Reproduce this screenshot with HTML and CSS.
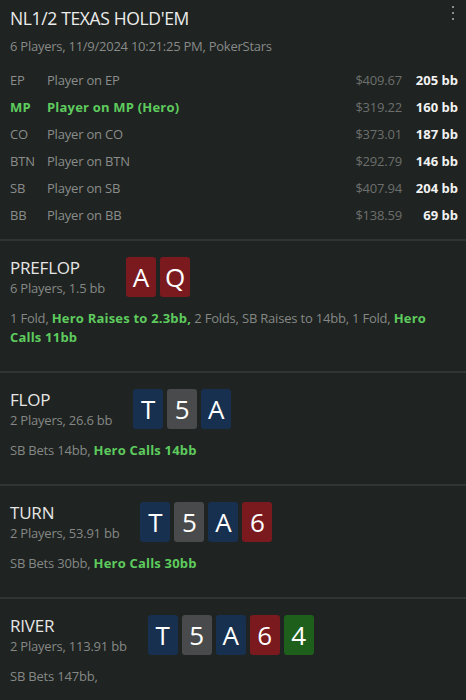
FILE: index.html
```html
<!DOCTYPE html>
<html>
<head>
<meta charset="utf-8">
<link rel="stylesheet" href="styles.css">
</head>
<body>
<div class="app">
  <header class="head">
    <div class="menu"><span></span><span></span><span></span></div>
    <h1 class="title">NL1/2 TEXAS HOLD'EM</h1>
    <div class="sub">6 Players, 11/9/2024 10:21:25 PM, PokerStars</div>
    <div class="players">
      <div class="prow"><span class="pos">EP</span><span class="name">Player on EP</span><span class="usd">$409.67</span><span class="bb">205 bb</span></div>
      <div class="prow hero"><span class="pos">MP</span><span class="name">Player on MP (Hero)</span><span class="usd">$319.22</span><span class="bb">160 bb</span></div>
      <div class="prow"><span class="pos">CO</span><span class="name">Player on CO</span><span class="usd">$373.01</span><span class="bb">187 bb</span></div>
      <div class="prow"><span class="pos">BTN</span><span class="name">Player on BTN</span><span class="usd">$292.79</span><span class="bb">146 bb</span></div>
      <div class="prow"><span class="pos">SB</span><span class="name">Player on SB</span><span class="usd">$407.94</span><span class="bb">204 bb</span></div>
      <div class="prow"><span class="pos">BB</span><span class="name">Player on BB</span><span class="usd">$138.59</span><span class="bb">69 bb</span></div>
    </div>
  </header>

  <section class="street">
    <div class="top">
      <div class="info">
        <div class="sname">PREFLOP</div>
        <div class="sdesc">6 Players, 1.5 bb</div>
      </div>
      <div class="cards"><span class="card red">A</span><span class="card red">Q</span></div>
    </div>
    <p class="actions">1 Fold, <b>Hero Raises to 2.3bb,</b> 2 Folds, SB Raises to 14bb, 1 Fold, <b>Hero Calls 11bb</b></p>
  </section>

  <section class="street">
    <div class="top">
      <div class="info">
        <div class="sname">FLOP</div>
        <div class="sdesc">2 Players, 26.6 bb</div>
      </div>
      <div class="cards"><span class="card blue">T</span><span class="card gray">5</span><span class="card blue">A</span></div>
    </div>
    <p class="actions">SB Bets 14bb, <b>Hero Calls 14bb</b></p>
  </section>

  <section class="street">
    <div class="top">
      <div class="info">
        <div class="sname">TURN</div>
        <div class="sdesc">2 Players, 53.91 bb</div>
      </div>
      <div class="cards"><span class="card blue">T</span><span class="card gray">5</span><span class="card blue">A</span><span class="card red">6</span></div>
    </div>
    <p class="actions">SB Bets 30bb, <b>Hero Calls 30bb</b></p>
  </section>

  <section class="street">
    <div class="top">
      <div class="info">
        <div class="sname">RIVER</div>
        <div class="sdesc">2 Players, 113.91 bb</div>
      </div>
      <div class="cards"><span class="card blue">T</span><span class="card gray">5</span><span class="card blue">A</span><span class="card red">6</span><span class="card green">4</span></div>
    </div>
    <p class="actions">SB Bets 147bb,</p>
  </section>
</div>
</body>
</html>
```
FILE: styles.css
```css
* { box-sizing: border-box; }
html, body { margin: 0; padding: 0; background: #1f2321; }
body {
  font-family: "Open Sans", "Noto Sans", sans-serif;
  color: #8c8f8d;
  width: 466px;
  height: 700px;
  overflow: hidden;
}
.app { display: flex; flex-direction: column; }
.head {
  position: relative;
  padding: 6px 8px 11px 10px;
  border-bottom: 2px solid #303533;
}
.menu {
  position: absolute;
  top: 6px;
  right: 12px;
  display: flex;
  flex-direction: column;
  gap: 4px;
}
.menu span { width: 2px; height: 2px; background: #8a8d8b; display: block; }
.title {
  margin: 0;
  font-size: 17.5px;
  letter-spacing: -0.35px;
  font-weight: 400;
  line-height: 24px;
  color: #ececec;
}
.sub {
  font-size: 13px;
  letter-spacing: -0.25px;
  line-height: 18px;
  margin-top: 7px;
  color: #878a88;
}
.players { margin-top: 11px; display: flex; flex-direction: column; }
.prow {
  display: flex;
  align-items: center;
  height: 27px;
  font-size: 13px;
  letter-spacing: -0.2px;
}
.pos { width: 37px; color: #8a8d8b; }
.name { flex: 1; color: #8a8d8b; }
.usd { color: #6c6f6d; text-align: right; }
.bb { width: 56px; text-align: right; color: #f2f2f2; font-weight: 700; letter-spacing: 0; }
.prow.hero .pos, .prow.hero .name { color: #5ecb5e; font-weight: 700; letter-spacing: 0.2px; }

.street {
  padding: 16px 10px 24px;
  border-bottom: 2px solid #303533;
}
.street:last-child { border-bottom: none; }
.top { display: flex; align-items: center; gap: 21px; }
.info { display: flex; flex-direction: column; }
.sname { font-size: 17px; letter-spacing: -0.2px; line-height: 22px; color: #e6e6e6; }
.sdesc { font-size: 13px; letter-spacing: -0.22px; line-height: 18px; color: #858886; }
.cards { display: flex; gap: 4px; }
.card {
  width: 30px;
  height: 40px;
  border-radius: 3px;
  color: #fff;
  font-size: 26px;
  display: flex;
  align-items: center;
  justify-content: center;
  line-height: 1;
}
.card.red { background: #7a1a1f; }
.card.blue { background: #18304f; }
.card.gray { background: #494a4b; }
.card.green { background: #1f5f1c; }
.actions {
  margin: 12px 0 0;
  font-size: 13px;
  letter-spacing: -0.2px;
  line-height: 19px;
  color: #858886;
}
.actions b { color: #5ecb5e; font-weight: 700; letter-spacing: 0.2px; }
```
